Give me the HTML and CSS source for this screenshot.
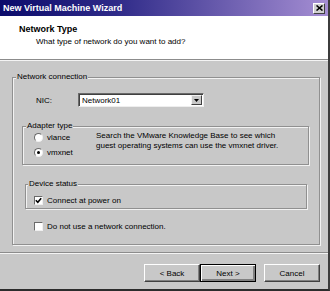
FILE: index.html
```html
<!DOCTYPE html>
<html>
<head>
    <title>New Virtual Machine Wizard</title>
    <meta name="viewport" content="width=device-width, initial-scale=1">
    <link rel="stylesheet" href="styles.css">
</head>
<body>
    <div class="window">
        <div class="titlebar">
            <span class="title">New Virtual Machine Wizard</span>
            <span class="close">
                <svg width="7" height="6" viewBox="0 0 7 6"><path d="M0.5 0.5 L6.5 5.5 M6.5 0.5 L0.5 5.5" stroke="#000" stroke-width="1.6" fill="none"/></svg>
            </span>
        </div>
        <div class="header">
            <div class="header-title">Network Type</div>
            <div class="header-sub">What type of network do you want to add?</div>
        </div>
        <div class="content">
            <fieldset class="group group-outer">
                <legend>Network connection</legend>
                <div class="nic-row">
                    <span class="nic-label">NIC:</span>
                    <div class="select">
                        <span class="select-value">Network01</span>
                        <span class="select-btn">
                            <svg width="5" height="3" viewBox="0 0 5 3"><path d="M0 0 H5 L2.5 3 Z" fill="#000"/></svg>
                        </span>
                    </div>
                </div>
                <fieldset class="group group-adapter">
                    <legend>Adapter type</legend>
                    <div class="adapter-body">
                        <div class="radios">
                            <div class="opt"><span class="radio"></span>vlance</div>
                            <div class="opt"><span class="radio checked"></span>vmxnet</div>
                        </div>
                        <p class="hint">Search the VMware Knowledge Base to see which<br>guest operating systems can use the vmxnet driver.</p>
                    </div>
                </fieldset>
                <fieldset class="group group-device">
                    <legend>Device status</legend>
                    <div class="opt opt-device">
                        <span class="check"><svg width="7" height="7" viewBox="0 0 7 7"><path d="M0.8 3.2 L2.8 5.2 L6.2 1.2" stroke="#000" stroke-width="1.6" fill="none"/></svg></span>
                        Connect at power on
                    </div>
                </fieldset>
                <div class="opt opt-alone"><span class="check"></span>Do not use a network connection.</div>
            </fieldset>
        </div>
        <div class="footer">
            <button class="btn">&lt; Back</button><button class="btn btn-default">Next &gt;</button><button class="btn btn-cancel">Cancel</button>
        </div>
    </div>
</body>
</html>
```
FILE: styles.css
```css
html, body {
    margin: 0;
    padding: 0;
}
body {
    font-family: 'Liberation Sans', Arial, sans-serif;
    font-size: 8px;
    color: #000;
    background: #c8c8c8;
}
.window {
    width: 330px;
    height: 291px;
    box-sizing: border-box;
    display: flex;
    flex-direction: column;
    background: #c8c8c8;
    border-right: 2px solid #3c3c3c;
    border-bottom: 2px solid #2c2c2c;
}
.titlebar {
    height: 16px;
    flex: none;
    display: flex;
    align-items: center;
    padding: 0 3px;
    background: linear-gradient(90deg, #0b0b6b 0%, #2e2a88 35%, #a58ed3 100%);
    color: #fff;
    font-weight: bold;
    font-size: 9px;
}
.close {
    margin-left: auto;
    width: 12px;
    height: 11px;
    box-sizing: border-box;
    background: #d0d0d0;
    border: 1px solid;
    border-color: #fff #404040 #404040 #fff;
    display: flex;
    align-items: center;
    justify-content: center;
}
.header {
    height: 44px;
    flex: none;
    box-sizing: border-box;
    background: #fff;
    border-bottom: 1px solid #8c8c8c;
    padding: 8px 0 0 19px;
}
.header-title {
    font-weight: bold;
    font-size: 9px;
    line-height: 11px;
}
.header-sub {
    margin: 2px 0 0 17px;
    line-height: 10px;
}
.content {
    flex: 1;
    border-top: 1px solid #f4f4f4;
    padding: 11px 8px 0 12px;
}
.group {
    margin: 0;
    padding: 0;
    min-width: 0;
    border: 1px solid #909090;
    box-shadow: inset 1px 1px 0 #f2f2f2, 1px 1px 0 #f2f2f2;
}
.group legend {
    padding: 0 1px;
    margin-left: 3px;
    line-height: 10px;
    background: #c8c8c8;
}
.group-outer {
    padding-bottom: 11px;
}
.nic-row {
    display: flex;
    align-items: center;
    height: 14px;
    margin: 11px 0 0 23px;
}
.nic-label {
    width: 42px;
}
.select {
    width: 126px;
    height: 14px;
    box-sizing: border-box;
    background: #fff;
    border: 1px solid;
    border-color: #6a6a6a #eee #eee #6a6a6a;
    box-shadow: inset 1px 1px 0 #404040;
    display: flex;
    align-items: center;
}
.select-value {
    flex: 1;
    padding-left: 3px;
}
.select-btn {
    width: 11px;
    height: 10px;
    margin-right: 1px;
    box-sizing: border-box;
    background: #c8c8c8;
    border: 1px solid;
    border-color: #f4f4f4 #404040 #404040 #f4f4f4;
    display: flex;
    align-items: center;
    justify-content: center;
}
.group-adapter {
    margin: 14px 10px 0 9px;
    padding-bottom: 5px;
}
.adapter-body {
    display: flex;
    margin-left: 11px;
}
.radios {
    width: 62px;
    display: flex;
    flex-direction: column;
    gap: 2px;
}
.opt {
    display: flex;
    align-items: center;
    gap: 4px;
    height: 13px;
}
.hint {
    margin: 0;
    line-height: 10px;
}
.radio, .check {
    width: 9px;
    height: 9px;
    box-sizing: border-box;
    background: #fff;
    border: 1px solid;
    border-color: #6a6a6a #f0f0f0 #f0f0f0 #6a6a6a;
    display: flex;
    align-items: center;
    justify-content: center;
    flex: none;
}
.radio {
    border-radius: 50%;
}
.radio.checked::after {
    content: '';
    width: 3px;
    height: 3px;
    border-radius: 50%;
    background: #000;
}
.group-device {
    margin: 14px 12px 0 12px;
    padding: 5px 0 1px 0;
}
.group-device legend {
    margin-left: 2px;
}
.opt-device {
    margin-left: 8px;
}
.opt-alone {
    margin: 11px 0 0 21px;
}
.footer {
    height: 37px;
    flex: none;
    box-sizing: border-box;
    border-top: 1px solid #8c8c8c;
    box-shadow: inset 0 1px 0 #f4f4f4;
    padding: 11px 8px 0 0;
    display: flex;
    justify-content: flex-end;
    align-items: flex-start;
}
.btn {
    width: 56px;
    height: 18px;
    box-sizing: border-box;
    padding: 0;
    font-family: inherit;
    font-size: 8px;
    color: #000;
    background: #c8c8c8;
    border: 1px solid;
    border-color: #fff #404040 #404040 #fff;
    box-shadow: inset -1px -1px 0 #808080;
}
.btn-default {
    border-color: #000;
    box-shadow: inset 1px 1px 0 #fff, inset -2px -2px 0 #808080;
}
.btn-cancel {
    margin-left: 8px;
}
```
